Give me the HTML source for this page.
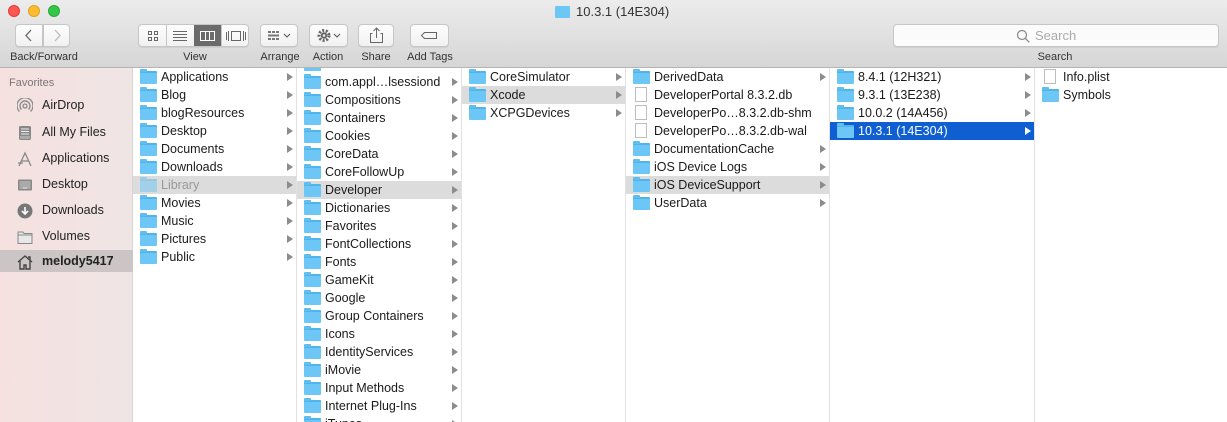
<!DOCTYPE html>
<html><head><meta charset="utf-8"><style>
*{margin:0;padding:0;box-sizing:border-box}
body{width:1227px;height:422px;overflow:hidden;font-family:"Liberation Sans",sans-serif;font-size:12.5px;color:#1a1a1a;background:#fff;position:relative}
.tb{position:absolute;left:0;top:0;width:1227px;height:68px;background:linear-gradient(#ececec,#d6d6d6);border-bottom:1px solid #b4b4b4}
.tl{position:absolute;top:5px;width:12px;height:12px;border-radius:50%}
.btn{position:absolute;top:24px;height:23px;background:linear-gradient(#fdfdfd,#f1f1f1);border:1px solid #c6c6c6;border-radius:4px;box-shadow:0 1px 0 rgba(0,0,0,.05)}
.lab{position:absolute;top:51px;font-size:11px;color:#333;text-align:center}
.sb{position:absolute;left:0;top:68px;width:133px;height:354px;background:linear-gradient(90deg,#f5e1df,#efe5e5);border-right:1px solid #d9d3d3}
.si{position:absolute;left:0;width:133px;height:22px;line-height:22px;padding-left:42px;font-size:12.5px;color:#222}
.si i{position:absolute;left:17px;top:4px;width:16px;height:14px}
.col{position:absolute;top:68px;height:354px;overflow:hidden;border-right:1px solid #e2e2e2}
.r{position:absolute;left:0;right:0;height:18px;line-height:19px;padding-left:28px;white-space:nowrap}
.r.s{background:#dcdcdc}
.r.b{background:#0f5fd3;color:#fff}
.f{position:absolute;left:7px;top:3px;width:17px;height:13px;background:#6cc6f6;border-radius:1px;border-top:2px solid #4fb4ea}
.f:before{content:"";position:absolute;left:0;top:-4px;width:7px;height:3px;background:#5fbdf0;border-radius:1px 1px 0 0}
.d{position:absolute;left:9px;top:1px;width:12px;height:15px;background:#fff;border:1px solid #bdbdbd}
.a{position:absolute;top:5px;width:0;height:0;border-left:6px solid #8c8c8c;border-top:4px solid transparent;border-bottom:4px solid transparent}
.b .a{border-left-color:#fff}
</style></head><body>
<div class="tb">
 <div class="tl" style="left:8px;background:#fc5753;border:1px solid #df3d38"></div>
 <div class="tl" style="left:28px;background:#fdbc2e;border:1px solid #dea123"></div>
 <div class="tl" style="left:48px;background:#33c748;border:1px solid #27aa35"></div>
 <div style="position:absolute;left:555px;top:6px;width:15px;height:12px;background:#6cc6f6;border-radius:1px"></div>
 <div style="position:absolute;left:576px;top:4px;font-size:13px;color:#333">10.3.1 (14E304)</div>
 <div class="btn" style="left:15px;width:28px;border-radius:4px 0 0 4px"><svg width="26" height="21"><path d="M15 5 L10 10.5 L15 16" stroke="#666" stroke-width="1.3" fill="none"/></svg></div>
 <div class="btn" style="left:43px;width:27px;border-radius:0 4px 4px 0"><svg width="26" height="21"><path d="M11 5 L16 10.5 L11 16" stroke="#bbb" stroke-width="1.3" fill="none"/></svg></div>
 <div class="lab" style="left:8px;width:72px">Back/Forward</div>
 <div class="btn" style="left:138px;width:111px;overflow:hidden">
  <svg width="111" height="21" style="position:absolute;left:0;top:0">
   <rect x="55" y="0" width="27" height="21" fill="#6b6b6b"/>
   <line x1="27.5" y1="0" x2="27.5" y2="21" stroke="#c6c6c6"/><line x1="82.5" y1="0" x2="82.5" y2="21" stroke="#c6c6c6"/>
   <g fill="none" stroke="#666"><rect x="9.5" y="6.5" width="3" height="3"/><rect x="15.5" y="6.5" width="3" height="3"/><rect x="9.5" y="12.5" width="3" height="3"/><rect x="15.5" y="12.5" width="3" height="3"/>
   <path d="M34 6.5h14M34 9.5h14M34 12.5h14M34 15.5h14"/></g>
   <g fill="none" stroke="#fff"><rect x="61.5" y="6.5" width="14" height="9"/><path d="M66.5 6.5v9M70.5 6.5v9"/></g>
   <g fill="none" stroke="#666"><rect x="92.5" y="6.5" width="9" height="9"/><path d="M89.5 6v10M104.5 6v10M87.5 7v8M106.5 7v8"/></g>
  </svg></div>
 <div class="lab" style="left:170px;width:50px">View</div>
 <div class="btn" style="left:260px;width:38px"><svg width="36" height="21"><g fill="#777"><rect x="7" y="6" width="3" height="2"/><rect x="11" y="6" width="3" height="2"/><rect x="15" y="6" width="3" height="2"/><rect x="7" y="9.5" width="11" height="2"/><rect x="7" y="13" width="3" height="2"/><rect x="11" y="13" width="3" height="2"/><rect x="15" y="13" width="3" height="2"/></g><path d="M23 9l3 3 3-3" stroke="#555" fill="none"/></svg></div>
 <div class="lab" style="left:255px;width:50px">Arrange</div>
 <div class="btn" style="left:309px;width:39px"><svg width="37" height="21"><circle cx="14" cy="10.5" r="5" fill="none" stroke="#666" stroke-width="3" stroke-dasharray="2 1.6"/><circle cx="14" cy="10.5" r="3.2" fill="#666"/><circle cx="14" cy="10.5" r="1.3" fill="#f5f5f5"/><path d="M24 9l3 3 3-3" stroke="#555" fill="none"/></svg></div>
 <div class="lab" style="left:303px;width:50px">Action</div>
 <div class="btn" style="left:358px;width:36px"><svg width="34" height="21"><path d="M13.5 8.5h-2v9h12v-9h-2M17.5 3v10M14.5 6l3-3 3 3" stroke="#666" fill="none"/></svg></div>
 <div class="lab" style="left:351px;width:50px">Share</div>
 <div class="btn" style="left:410px;width:39px"><svg width="37" height="21"><path d="M13.5 7.5h12v6h-12l-3-3z" stroke="#666" fill="none"/></svg></div>
 <div class="lab" style="left:399px;width:62px">Add Tags</div>
 <div class="btn" style="left:893px;width:326px;background:#fbfbfb"><svg width="20" height="20" style="position:absolute;left:120px;top:2px"><circle cx="8" cy="8" r="4.5" stroke="#888" stroke-width="1.2" fill="none"/><path d="M11.3 11.3l4 4" stroke="#888" stroke-width="1.3"/></svg><span style="position:absolute;left:141px;top:3px;font-size:13px;color:#aaa">Search</span></div>
 <div class="lab" style="left:1030px;width:50px">Search</div>
</div>

<div class="sb">
 <div style="position:absolute;left:9px;top:9px;font-size:11px;color:#7d7575">Favorites</div>
 <div class="si" style="top:26px"><i><svg width="16" height="16"><g fill="none" stroke="#888" stroke-width="1.3"><circle cx="8" cy="8" r="2"/><path d="M4.5 11.5a5 5 0 1 1 7 0M2.5 13.5a8 8 0 1 1 11 0"/></g></svg></i>AirDrop</div>
 <div class="si" style="top:53px"><i><svg width="16" height="16"><rect x="2" y="1" width="12" height="14" rx="1.5" fill="#888"/><path d="M4 4h8M4 6.5h8M4 9h8" stroke="#eee"/><rect x="3" y="11" width="10" height="3" fill="#aaa"/></svg></i>All My Files</div>
 <div class="si" style="top:79px"><i><svg width="16" height="16"><path d="M2 15L8 2l6 13M4 10h8M1 12h5" stroke="#888" stroke-width="1.3" fill="none"/></svg></i>Applications</div>
 <div class="si" style="top:105px"><i><svg width="16" height="16"><rect x="1" y="2.5" width="14" height="11" rx="1" fill="#888"/><rect x="2.5" y="4" width="11" height="8" fill="#aaa"/><path d="M6 11h4" stroke="#ddd"/></svg></i>Desktop</div>
 <div class="si" style="top:131px"><i><svg width="16" height="16"><circle cx="8" cy="8" r="7.5" fill="#777"/><path d="M8 4v7M5 8l3 3 3-3" stroke="#fff" stroke-width="1.6" fill="none"/></svg></i>Downloads</div>
 <div class="si" style="top:157px"><i><svg width="16" height="16"><path d="M1 3h5l1 1.5h8v10h-14z" fill="#e8e8e8" stroke="#888"/><path d="M1 6h14" stroke="#888"/></svg></i>Volumes</div>
 <div class="si" style="top:182px;background:#cbc5c6;font-weight:bold"><i><svg width="16" height="16"><path d="M1 8L8 2l7 6M3 7v8h4v-4h2v4h4V7M11 3h2v3" stroke="#444" stroke-width="1.4" fill="none"/></svg></i>melody5417</div>
</div>

<div class="col" style="left:133px;width:164px">
 <div class="r" style="top:0"><span class="f"></span>Applications<span class="a" style="left:154px"></span></div>
 <div class="r" style="top:18px"><span class="f"></span>Blog<span class="a" style="left:154px"></span></div>
 <div class="r" style="top:36px"><span class="f"></span>blogResources<span class="a" style="left:154px"></span></div>
 <div class="r" style="top:54px"><span class="f"></span>Desktop<span class="a" style="left:154px"></span></div>
 <div class="r" style="top:72px"><span class="f"></span>Documents<span class="a" style="left:154px"></span></div>
 <div class="r" style="top:90px"><span class="f"></span>Downloads<span class="a" style="left:154px"></span></div>
 <div class="r s" style="top:108px;color:#999"><span class="f" style="opacity:.5"></span>Library<span class="a" style="left:154px"></span></div>
 <div class="r" style="top:126px"><span class="f"></span>Movies<span class="a" style="left:154px"></span></div>
 <div class="r" style="top:144px"><span class="f"></span>Music<span class="a" style="left:154px"></span></div>
 <div class="r" style="top:162px"><span class="f"></span>Pictures<span class="a" style="left:154px"></span></div>
 <div class="r" style="top:180px"><span class="f"></span>Public<span class="a" style="left:154px"></span></div>
</div>

<div class="col" style="left:297px;width:165px">
 <div class="r" style="top:-13px"><span class="f"></span>Colors<span class="a" style="left:155px"></span></div>
 <div class="r" style="top:5px"><span class="f"></span>com.appl…lsessiond<span class="a" style="left:155px"></span></div>
 <div class="r" style="top:23px"><span class="f"></span>Compositions<span class="a" style="left:155px"></span></div>
 <div class="r" style="top:41px"><span class="f"></span>Containers<span class="a" style="left:155px"></span></div>
 <div class="r" style="top:59px"><span class="f"></span>Cookies<span class="a" style="left:155px"></span></div>
 <div class="r" style="top:77px"><span class="f"></span>CoreData<span class="a" style="left:155px"></span></div>
 <div class="r" style="top:95px"><span class="f"></span>CoreFollowUp<span class="a" style="left:155px"></span></div>
 <div class="r s" style="top:113px"><span class="f"></span>Developer<span class="a" style="left:155px"></span></div>
 <div class="r" style="top:131px"><span class="f"></span>Dictionaries<span class="a" style="left:155px"></span></div>
 <div class="r" style="top:149px"><span class="f"></span>Favorites<span class="a" style="left:155px"></span></div>
 <div class="r" style="top:167px"><span class="f"></span>FontCollections<span class="a" style="left:155px"></span></div>
 <div class="r" style="top:185px"><span class="f"></span>Fonts<span class="a" style="left:155px"></span></div>
 <div class="r" style="top:203px"><span class="f"></span>GameKit<span class="a" style="left:155px"></span></div>
 <div class="r" style="top:221px"><span class="f"></span>Google<span class="a" style="left:155px"></span></div>
 <div class="r" style="top:239px"><span class="f"></span>Group Containers<span class="a" style="left:155px"></span></div>
 <div class="r" style="top:257px"><span class="f"></span>Icons<span class="a" style="left:155px"></span></div>
 <div class="r" style="top:275px"><span class="f"></span>IdentityServices<span class="a" style="left:155px"></span></div>
 <div class="r" style="top:293px"><span class="f"></span>iMovie<span class="a" style="left:155px"></span></div>
 <div class="r" style="top:311px"><span class="f"></span>Input Methods<span class="a" style="left:155px"></span></div>
 <div class="r" style="top:329px"><span class="f"></span>Internet Plug-Ins<span class="a" style="left:155px"></span></div>
 <div class="r" style="top:347px"><span class="f"></span>iTunes<span class="a" style="left:155px"></span></div>
</div>

<div class="col" style="left:462px;width:164px">
 <div class="r" style="top:0"><span class="f"></span>CoreSimulator<span class="a" style="left:154px"></span></div>
 <div class="r s" style="top:18px"><span class="f"></span>Xcode<span class="a" style="left:154px"></span></div>
 <div class="r" style="top:36px"><span class="f"></span>XCPGDevices<span class="a" style="left:154px"></span></div>
</div>

<div class="col" style="left:626px;width:204px">
 <div class="r" style="top:0"><span class="f"></span>DerivedData<span class="a" style="left:194px"></span></div>
 <div class="r" style="top:18px"><span class="d"></span>DeveloperPortal 8.3.2.db</div>
 <div class="r" style="top:36px"><span class="d"></span>DeveloperPo…8.3.2.db-shm</div>
 <div class="r" style="top:54px"><span class="d"></span>DeveloperPo…8.3.2.db-wal</div>
 <div class="r" style="top:72px"><span class="f"></span>DocumentationCache<span class="a" style="left:194px"></span></div>
 <div class="r" style="top:90px"><span class="f"></span>iOS Device Logs<span class="a" style="left:194px"></span></div>
 <div class="r s" style="top:108px"><span class="f"></span>iOS DeviceSupport<span class="a" style="left:194px"></span></div>
 <div class="r" style="top:126px"><span class="f"></span>UserData<span class="a" style="left:194px"></span></div>
</div>

<div class="col" style="left:830px;width:205px">
 <div class="r" style="top:0"><span class="f"></span>8.4.1 (12H321)<span class="a" style="left:195px"></span></div>
 <div class="r" style="top:18px"><span class="f"></span>9.3.1 (13E238)<span class="a" style="left:195px"></span></div>
 <div class="r" style="top:36px"><span class="f"></span>10.0.2 (14A456)<span class="a" style="left:195px"></span></div>
 <div class="r b" style="top:54px"><span class="f"></span>10.3.1 (14E304)<span class="a" style="left:195px"></span></div>
</div>

<div class="col" style="left:1035px;width:192px;border-right:none">
 <div class="r" style="top:0"><span class="d"></span>Info.plist</div>
 <div class="r" style="top:18px"><span class="f"></span>Symbols</div>
</div>
</body></html>
